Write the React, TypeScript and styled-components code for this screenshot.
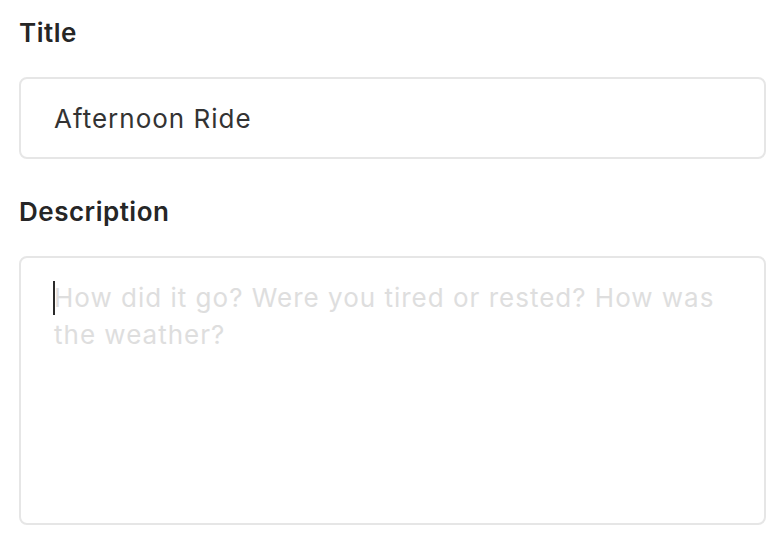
import React from "react";
import styled, { createGlobalStyle } from "styled-components";

const Global = createGlobalStyle`
  html, body { margin: 0; padding: 0; background: #ffffff; }
  body { font-family: Inter, "Noto Sans", sans-serif; }
  * { box-sizing: border-box; }
`;

const Form = styled.form`
  display: flex;
  flex-direction: column;
  padding: 16px 18px 0 19px;
  width: 784px;
`;

const Field = styled.div`
  display: flex;
  flex-direction: column;
  margin-bottom: 36px;
`;

const Label = styled.label`
  font-size: 26px;
  font-weight: 600;
  letter-spacing: 0.5px;
  color: #262626;
  line-height: 34px;
  margin-bottom: 27px;
`;

const Input = styled.input`
  height: 82px;
  width: 100%;
  border: 2px solid #e6e6e6;
  border-radius: 8px;
  padding: 0 33px;
  font-family: Inter, "Noto Sans", sans-serif;
  font-size: 26px;
  letter-spacing: 1px;
  color: #333333;
  background: #fff;
  outline: none;
`;

const AreaWrap = styled.div`
  position: relative;
  display: flex;
`;

const TextArea = styled.textarea`
  height: 269px;
  width: 100%;
  border: 2px solid #e6e6e6;
  border-radius: 8px;
  padding: 21px 33px;
  font-family: Inter, "Noto Sans", sans-serif;
  font-size: 26px;
  letter-spacing: 1px;
  line-height: 37px;
  color: #333333;
  background: #fff;
  resize: none;
  outline: none;
  caret-color: transparent;
  &::placeholder { color: #dedede; }
`;

const Caret = styled.span`
  position: absolute;
  left: 34px;
  top: 25px;
  width: 2px;
  height: 34px;
  background: #2a2a2a;
`;

export default function App() {
  return (
    <>
      <Global />
      <Form>
        <Field>
          <Label htmlFor="title">Title</Label>
          <Input id="title" defaultValue="Afternoon Ride" />
        </Field>
        <Field>
          <Label htmlFor="desc">Description</Label>
          <AreaWrap>
            <TextArea id="desc" placeholder="How did it go? Were you tired or rested? How was the weather?" />
            <Caret />
          </AreaWrap>
        </Field>
      </Form>
    </>
  );
}
